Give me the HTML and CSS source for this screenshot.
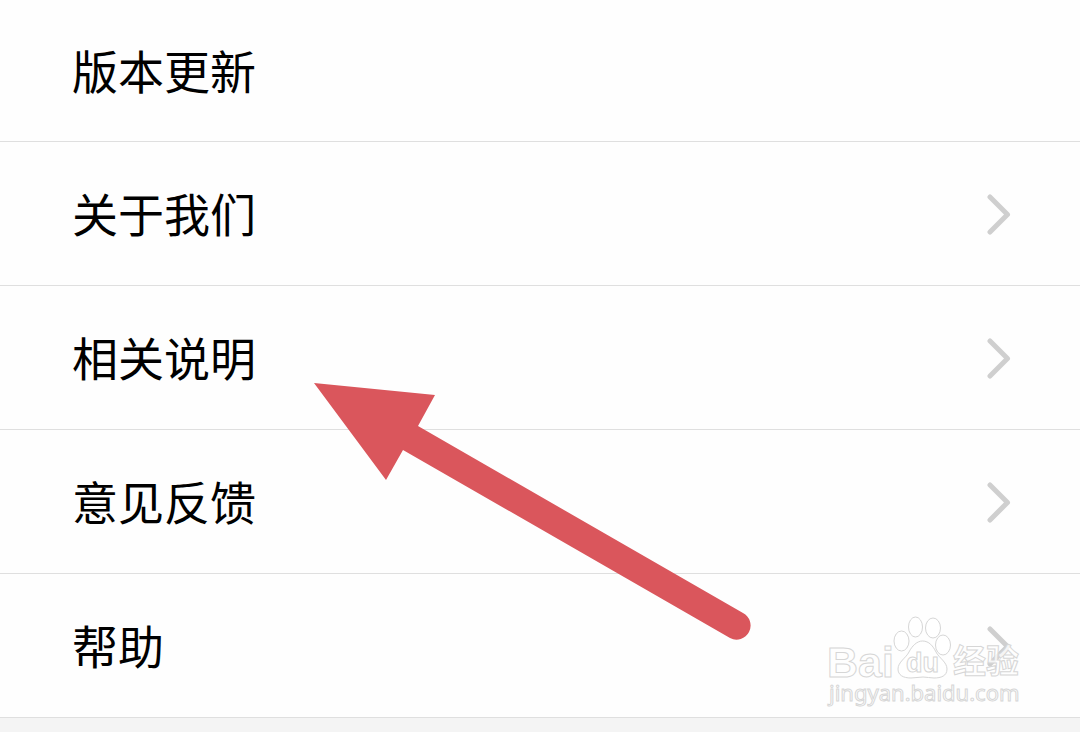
FILE: index.html
```html
<!DOCTYPE html>
<html lang="zh-CN">
<head>
<meta charset="utf-8">
<meta name="viewport" content="width=device-width, initial-scale=1">
<title>设置</title>
<link rel="stylesheet" href="styles.css">
</head>
<body>
<main class="page">
  <ul class="menu">
    <li><button class="row" type="button"><span class="label">版本更新</span></button></li>
    <li><a class="row" href="#about"><span class="label">关于我们</span><svg class="chevron" viewBox="0 0 26 42" aria-hidden="true"><path d="M4 4 21.500 21.500 4 39"/></svg></a></li>
    <li><a class="row" href="#notes"><span class="label">相关说明</span><svg class="chevron" viewBox="0 0 26 42" aria-hidden="true"><path d="M4 4 21.500 21.500 4 39"/></svg></a></li>
    <li><a class="row" href="#feedback"><span class="label">意见反馈</span><svg class="chevron" viewBox="0 0 26 42" aria-hidden="true"><path d="M4 4 21.500 21.500 4 39"/></svg></a></li>
    <li><a class="row" href="#help"><span class="label">帮助</span><svg class="chevron" viewBox="0 0 26 42" aria-hidden="true"><path d="M4 4 21.500 21.500 4 39"/></svg></a></li>
  </ul>
  <svg class="pointer" viewBox="0 0 440 260" aria-hidden="true">
    <path d="M0 0 121 12 104 43 429 230A14 14 0 0 1 416 255L89 67 72 97Z"/>
  </svg>
  <svg class="watermark" viewBox="0 0 210 104" aria-hidden="true">
    <text class="mark brand" x="5" y="67">Bai</text>
    <g class="mark">
      <ellipse cx="79.500" cy="31" rx="7.500" ry="10"/>
      <ellipse cx="93.500" cy="17" rx="7" ry="10"/>
      <ellipse cx="111" cy="18" rx="7.500" ry="10"/>
      <ellipse cx="121" cy="35" rx="7.500" ry="10"/>
      <path d="M100.500 31C107 31 111 36 114 42C117 48 125 52 125 59C125 66 119 68 112 68C108 68 105 67 101 67C97 67 93 68 89 68C81 68 76 65 76 59C76 52 84 48 87 42C90 36 95 31 100.500 31Z"/>
    </g>
    <text class="mark du" x="84" y="62">du</text>
    <text class="mark cjk" x="131" y="63">经验</text>
    <text class="mark site" x="7" y="91">jingyan.baidu.com</text>
  </svg>
</main>
</body>
</html>
```
FILE: styles.css
```css
body {
  margin: 0;
  background: #f4f4f4;
  color: #000;
  font-family: "Noto Sans CJK SC", sans-serif;
}

.page {
  position: relative;
  min-height: 100vh;
  overflow: hidden;
}

.menu {
  margin: 0;
  padding: 0;
  list-style: none;
  background: #fefefe;
}

.row {
  display: flex;
  align-items: center;
  justify-content: space-between;
  box-sizing: border-box;
  width: 100%;
  min-height: 144px;
  padding: 0 68px 0 72px;
  border: 0;
  border-bottom: 1px solid #dfdfdf;
  background: none;
  color: inherit;
  font: inherit;
  font-size: 46px;
  line-height: 68px;
  text-align: left;
  text-decoration: none;
}

.menu li:first-child .row {
  min-height: 142px;
}

.label {
  padding-bottom: 3px;
}

.chevron {
  width: 26px;
  height: 42px;
  fill: none;
  stroke: #cfcfcf;
  stroke-width: 5;
  stroke-linecap: round;
  stroke-linejoin: round;
}

.pointer {
  position: absolute;
  left: 314px;
  top: 383px;
  width: 440px;
  height: 260px;
  fill: #da565c;
}

.watermark {
  position: absolute;
  left: 822px;
  top: 610px;
  width: 210px;
  height: 104px;
}

.mark {
  fill: #fff;
  fill-opacity: 0.8;
  stroke: #d6d6d6;
  stroke-width: 1;
}

.brand {
  font: bold 43px "Liberation Sans", sans-serif;
}

.du {
  font: bold 27px "Liberation Sans", sans-serif;
}

.cjk {
  font: bold 33px "Noto Sans CJK SC", sans-serif;
}

.site {
  font: 22px "Noto Sans", sans-serif;
}
```
